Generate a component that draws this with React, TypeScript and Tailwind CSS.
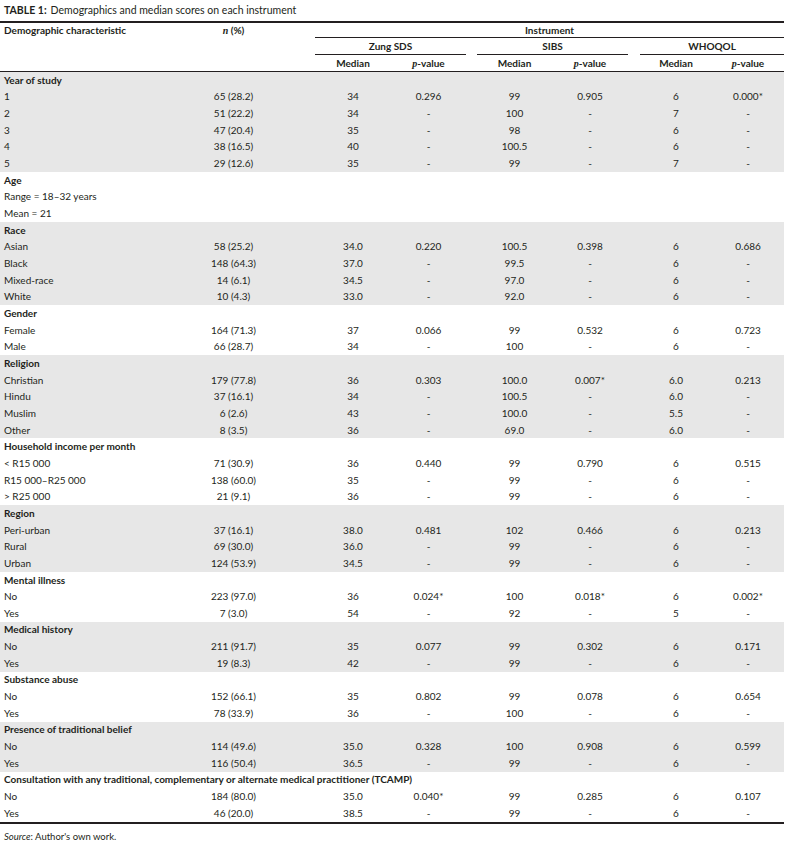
type Section = {
  title: string;
  shaded: boolean;
  rows: string[][];
};

const sections: Section[] = [
  {
    title: "Year of study",
    shaded: true,
    rows: [
      ["1", "65 (28.2)", "34", "0.296", "99", "0.905", "6", "0.000*"],
      ["2", "51 (22.2)", "34", "-", "100", "-", "7", "-"],
      ["3", "47 (20.4)", "35", "-", "98", "-", "6", "-"],
      ["4", "38 (16.5)", "40", "-", "100.5", "-", "6", "-"],
      ["5", "29 (12.6)", "35", "-", "99", "-", "7", "-"],
    ],
  },
  {
    title: "Age",
    shaded: false,
    rows: [["Range = 18\u201332 years"], ["Mean = 21"]],
  },
  {
    title: "Race",
    shaded: true,
    rows: [
      ["Asian", "58 (25.2)", "34.0", "0.220", "100.5", "0.398", "6", "0.686"],
      ["Black", "148 (64.3)", "37.0", "-", "99.5", "-", "6", "-"],
      ["Mixed-race", "14 (6.1)", "34.5", "-", "97.0", "-", "6", "-"],
      ["White", "10 (4.3)", "33.0", "-", "92.0", "-", "6", "-"],
    ],
  },
  {
    title: "Gender",
    shaded: false,
    rows: [
      ["Female", "164 (71.3)", "37", "0.066", "99", "0.532", "6", "0.723"],
      ["Male", "66 (28.7)", "34", "-", "100", "-", "6", "-"],
    ],
  },
  {
    title: "Religion",
    shaded: true,
    rows: [
      ["Christian", "179 (77.8)", "36", "0.303", "100.0", "0.007*", "6.0", "0.213"],
      ["Hindu", "37 (16.1)", "34", "-", "100.5", "-", "6.0", "-"],
      ["Muslim", "6 (2.6)", "43", "-", "100.0", "-", "5.5", "-"],
      ["Other", "8 (3.5)", "36", "-", "69.0", "-", "6.0", "-"],
    ],
  },
  {
    title: "Household income per month",
    shaded: false,
    rows: [
      ["< R15 000", "71 (30.9)", "36", "0.440", "99", "0.790", "6", "0.515"],
      ["R15 000\u2013R25 000", "138 (60.0)", "35", "-", "99", "-", "6", "-"],
      ["> R25 000", "21 (9.1)", "36", "-", "99", "-", "6", "-"],
    ],
  },
  {
    title: "Region",
    shaded: true,
    rows: [
      ["Peri-urban", "37 (16.1)", "38.0", "0.481", "102", "0.466", "6", "0.213"],
      ["Rural", "69 (30.0)", "36.0", "-", "99", "-", "6", "-"],
      ["Urban", "124 (53.9)", "34.5", "-", "99", "-", "6", "-"],
    ],
  },
  {
    title: "Mental illness",
    shaded: false,
    rows: [
      ["No", "223 (97.0)", "36", "0.024*", "100", "0.018*", "6", "0.002*"],
      ["Yes", "7 (3.0)", "54", "-", "92", "-", "5", "-"],
    ],
  },
  {
    title: "Medical history",
    shaded: true,
    rows: [
      ["No", "211 (91.7)", "35", "0.077", "99", "0.302", "6", "0.171"],
      ["Yes", "19 (8.3)", "42", "-", "99", "-", "6", "-"],
    ],
  },
  {
    title: "Substance abuse",
    shaded: false,
    rows: [
      ["No", "152 (66.1)", "35", "0.802", "99", "0.078", "6", "0.654"],
      ["Yes", "78 (33.9)", "36", "-", "100", "-", "6", "-"],
    ],
  },
  {
    title: "Presence of traditional belief",
    shaded: true,
    rows: [
      ["No", "114 (49.6)", "35.0", "0.328", "100", "0.908", "6", "0.599"],
      ["Yes", "116 (50.4)", "36.5", "-", "99", "-", "6", "-"],
    ],
  },
  {
    title:
      "Consultation with any traditional, complementary or alternate medical practitioner (TCAMP)",
    shaded: false,
    rows: [
      ["No", "184 (80.0)", "35.0", "0.040*", "99", "0.285", "6", "0.107"],
      ["Yes", "46 (20.0)", "38.5", "-", "99", "-", "6", "-"],
    ],
  },
];

// label | n | zung med | zung p | gap | sibs med | sibs p | gap | who med | who p
const grid =
  "grid grid-cols-[152px_163px_76px_75px_11px_75px_76px_12px_72px_72px]";

function PValue() {
  return (
    <>
      <span className="font-['Liberation_Serif',serif] italic">p</span>-value
    </>
  );
}

function DataRow({ cells }: { cells: string[] }) {
  const [label, n, zm, zp, sm, sp, wm, wp] = cells;
  return (
    <div className={`${grid} h-[16.67px] items-center`}>
      <div className="whitespace-nowrap pl-1">{label}</div>
      <div className="text-center">{n}</div>
      <div className="text-center">{zm}</div>
      <div className="text-center">{zp}</div>
      <div />
      <div className="text-center">{sm}</div>
      <div className="text-center">{sp}</div>
      <div />
      <div className="text-center">{wm}</div>
      <div className="text-center">{wp}</div>
    </div>
  );
}

export default function App() {
  return (
    <div className="w-[790px] bg-white font-['Lato',sans-serif] text-[10px] text-[#231f20]">
      <div className="flex h-[21px] items-center pl-1 pt-[1px] text-[10.5px]">
        <span className="font-bold">TABLE 1:</span>
        <span className="ml-1">Demographics and median scores on each instrument</span>
      </div>

      <div className="w-[784px] border-b-2 border-t-2 border-[#231f20]">
        {/* header */}
        <div className="font-bold">
          <div className={`${grid} h-[15px]`}>
            <div className="pl-1 leading-[14px]">Demographic characteristic</div>
            <div className="text-center leading-[14px]">
              <span className="font-['Liberation_Serif',serif] italic">n</span> (%)
            </div>
            <div className="col-span-8 border-b border-[#231f20] text-center leading-[14px]">
              Instrument
            </div>
          </div>
          <div className={`${grid} h-[17px]`}>
            <div />
            <div />
            <div className="col-span-2 border-b border-[#231f20] text-center leading-[16px]">
              Zung SDS
            </div>
            <div />
            <div className="col-span-2 border-b border-[#231f20] text-center leading-[16px]">
              SIBS
            </div>
            <div />
            <div className="col-span-2 border-b border-[#231f20] text-center leading-[16px]">
              WHOQOL
            </div>
          </div>
          <div className={`${grid} h-[17px] items-center border-b border-[#231f20]`}>
            <div />
            <div />
            <div className="text-center">Median</div>
            <div className="text-center">
              <PValue />
            </div>
            <div />
            <div className="text-center">Median</div>
            <div className="text-center">
              <PValue />
            </div>
            <div />
            <div className="text-center">Median</div>
            <div className="text-center">
              <PValue />
            </div>
          </div>
        </div>

        {/* body */}
        {sections.map((section) => (
          <div key={section.title} className={section.shaded ? "bg-[#e7e7e7]" : "bg-white"}>
            <div className="flex h-[16.67px] items-center whitespace-nowrap pl-1 font-bold">
              {section.title}
            </div>
            {section.rows.map((row, i) => (
              <DataRow key={i} cells={row} />
            ))}
          </div>
        ))}
      </div>

      <div className="mt-[6px] pl-1 text-[9.5px] leading-[14px]">
        <span className="italic">Source</span>: Author&apos;s own work.
      </div>
    </div>
  );
}
